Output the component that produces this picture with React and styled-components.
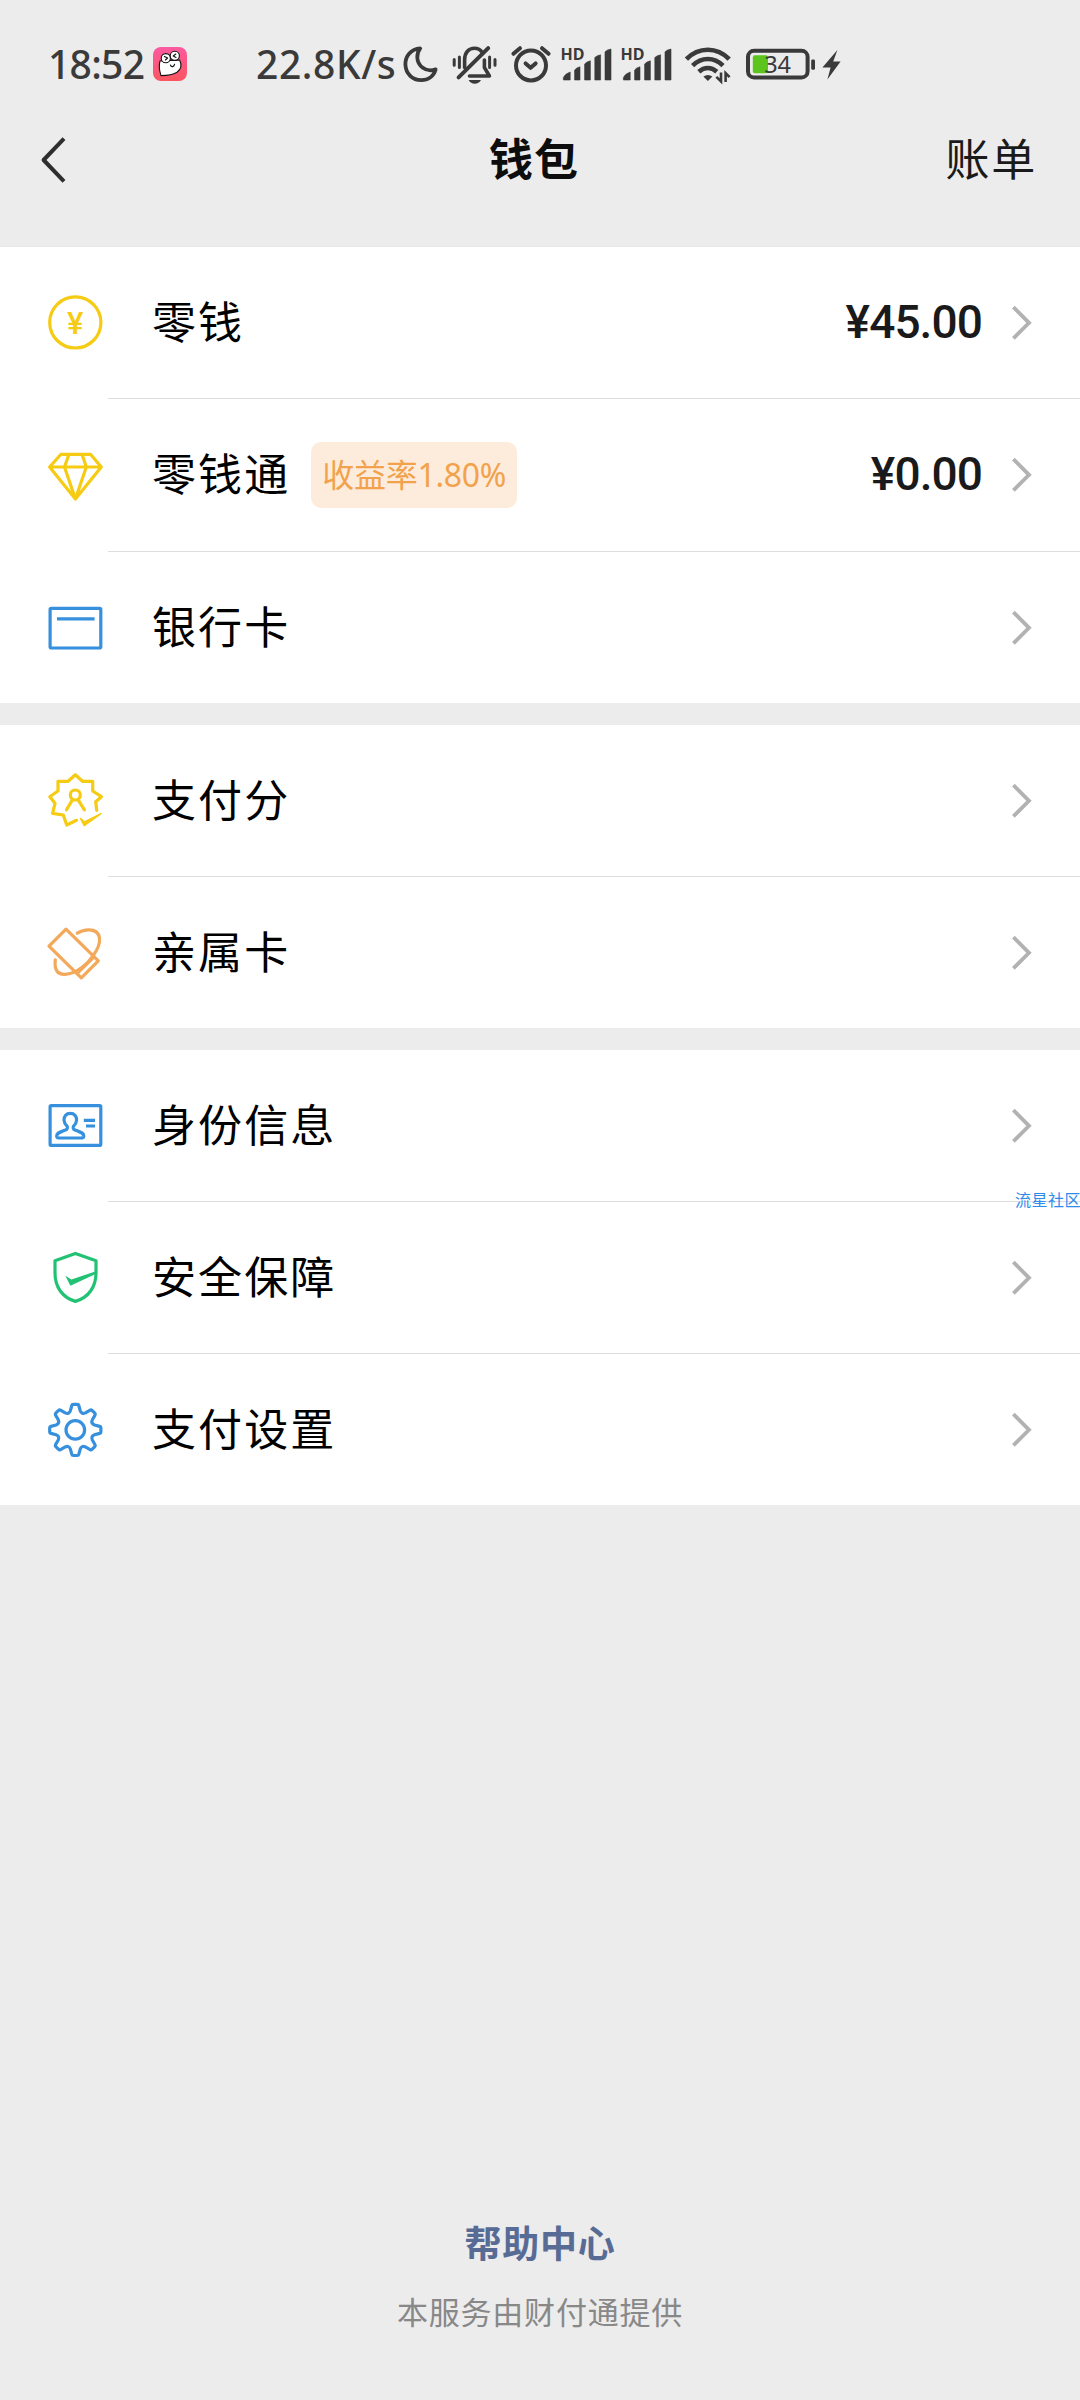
import React from "react";
import styled, { createGlobalStyle } from "styled-components";

const GlobalStyle = createGlobalStyle`
  html, body { margin: 0; padding: 0; background: #ececec; }
  * { box-sizing: border-box; }
  svg { display: block; flex: none; }
`;

const cjk = `"Noto Sans CJK SC", sans-serif`;

const Page = styled.div`
  position: relative;
  display: flex;
  flex-direction: column;
  width: 1080px;
  height: 2400px;
  overflow: hidden;
  background: #ececec;
  color: #000;
  font-family: "Noto Sans", ${cjk};
`;

const StatusBar = styled.header`
  display: flex;
  align-items: center;
  height: 128px;
  padding-left: 48px;
  flex: none;
`;

const StatusText = styled.span`
  width: ${(p) => p.$width}px;
  margin-left: ${(p) => p.$gap || 0}px;
  font: 500 39px/44px "Noto Sans", sans-serif;
  letter-spacing: ${(p) => p.$spacing || 0}px;
  color: #3a3a3a;
  white-space: nowrap;
`;

const StatusIcon = styled.svg`
  height: 44px;
  width: ${(p) => p.$width}px;
  margin-left: ${(p) => p.$gap}px;
  overflow: visible;
  color: #3a3a3a;
`;

const NavBar = styled.nav`
  display: grid;
  grid-template-columns: 1fr auto 1fr;
  align-items: center;
  height: 119px;
  padding: 0 43px 54px 40px;
  border-bottom: 1px solid #e8e8e8;
  flex: none;
`;

const Title = styled.h1`
  margin: 0 9px 6px 0;
  font: 700 44px/58px ${cjk};
  letter-spacing: 1px;
  color: #0d0d0d;
`;

const NavAction = styled.span`
  justify-self: end;
  margin-bottom: 6px;
  font: 400 44px/58px ${cjk};
  letter-spacing: 1.8px;
  color: #1a1a1a;
`;

const Group = styled.ul`
  list-style: none;
  margin: 0 0 22px;
  padding: 0;
  background: #fff;
  flex: none;
`;

const Row = styled.li`
  display: flex;
  align-items: center;
  height: ${(p) => p.$height || 152}px;
  padding: 0 48px ${(p) => (p.$height > 152 ? 1 : 0)}px 45px;
  background: ${(p) =>
    p.$last ? "none" : "linear-gradient(#dedede, #dedede) 108px 100% / 100% 1px no-repeat"};
`;

const Label = styled.span`
  margin-left: 47px;
  padding-bottom: 6px;
  font: 400 44px/64px ${cjk};
  letter-spacing: 2.1px;
`;

const Badge = styled.span`
  height: 66px;
  width: 206px;
  margin-left: 21px;
  padding-left: 11px;
  border-radius: 10px;
  background: #fdecdb;
  color: #f2a24c;
  font: 400 32px/65px "Noto Sans", ${cjk};
  letter-spacing: -0.3px;
  white-space: nowrap;
`;

const Amount = styled.span`
  margin-left: auto;
  margin-right: 28px;
  padding-bottom: 2px;
  font: 500 46px/64px Roboto, sans-serif;
  letter-spacing: -0.9px;
  color: #1a1a1a;
`;

const Chevron = styled.svg`
  width: 22px;
  height: 40px;
  margin-left: ${(p) => (p.$push ? "auto" : 0)};
`;

const Footer = styled.footer`
  display: flex;
  flex-direction: column;
  align-items: center;
  margin-top: auto;
  padding-bottom: 65px;
`;

const HelpLink = styled.a`
  font: 700 37px/54px ${cjk};
  letter-spacing: 0.8px;
  color: #576b95;
`;

const Provider = styled.span`
  margin-top: 18px;
  font: 400 31px/48px ${cjk};
  letter-spacing: 0.8px;
  color: #888;
`;

const Watermark = styled.span`
  position: absolute;
  left: 1015px;
  top: 1187px;
  font: 400 16px/24px ${cjk};
  letter-spacing: 0.5px;
  color: #2f8bea;
  white-space: nowrap;
`;

const IconBox = styled.svg.attrs({ viewBox: "0 0 60 60", fill: "none" })`
  width: 60px;
  height: 60px;
  stroke: ${(p) => p.$color};
  stroke-width: 3.2;
  stroke-linejoin: round;
  stroke-linecap: round;
`;

const YELLOW = "#f5cb14";
const BLUE = "#3690de";
const ORANGE = "#f3a85a";
const GREEN = "#22c274";

const CoinSign = styled.text`
  font: 500 31px Roboto, sans-serif;
  fill: ${YELLOW};
  stroke: none;
  text-anchor: middle;
`;

const CoinIcon = () => (
  <IconBox $color={YELLOW}>
    <circle cx="30.3" cy="29.4" r="25.6" />
    <CoinSign x="30.3" y="41">¥</CoinSign>
  </IconBox>
);

const DiamondIcon = () => (
  <IconBox $color={YELLOW}>
    <path d="M16 9.3H45.5L56.3 22L30.4 54L4.6 22Z M4.6 22H56.3 M24 9.3L19.5 22L30.4 54L41.3 22L37 9.3" />
  </IconBox>
);

const CardIcon = () => (
  <IconBox $color={BLUE}>
    <rect x="5.1" y="10.3" width="50.7" height="39.7" rx="1.2" />
    <path d="M12 20.8H49.6" strokeLinecap="butt" />
  </IconBox>
);

const ScoreIcon = () => (
  <IconBox $color={YELLOW}>
    <path d="M51.7 39.4L50.7 30.7L56.4 25.7L47.7 20V10.3H37.5L30.3 3.8L23.2 10.3H13V20L4.8 25.7L10 32.3L7.6 42.3L18.3 44L21.7 54L31.5 49.3" />
    <circle cx="30.3" cy="24" r="5" />
    <path d="M27.6 28.6L21.5 38.8M33 28.6L39.4 38.8" />
    <path d="M35.5 47.5L39.5 50.8L56 42.6L39.2 54.6Z" fill={YELLOW} strokeWidth="1.5" />
  </IconBox>
);

const FamilyIcon = () => (
  <IconBox $color={ORANGE}>
    <path d="M21 6.2L4 23.2L36.3 54.8L53.3 37.8Z" />
    <path d="M49 33.8L32 50.6" />
    <path d="M10.3 36.8C9 47.5 13 51.7 20 51.3C32 51 43.5 40 48.5 32C57.5 20 57 6.6 43.5 6.8C39.5 6.8 35.5 8.2 32.3 10.2" />
  </IconBox>
);

const IdentityIcon = () => (
  <IconBox $color={BLUE}>
    <rect x="5.1" y="9.7" width="50.7" height="39.7" rx="1.2" />
    <path d="M25.3 17.4C29.4 17.4 31.7 20.3 31.6 24C31.5 27 30.2 28.6 28.4 30.4C27.4 33 29 33.6 31.5 34.6C36 36.3 39 37 38.8 40.2C38.6 41.9 37.5 42 35.5 42H15C13 42 11.9 41.9 11.7 40.2C11.5 37 14.5 36.3 19 34.6C21.6 33.6 23.2 33 22.2 30.4C20.4 28.6 19.1 27 19 24C18.9 20.3 21.2 17.4 25.3 17.4Z" />
    <path d="M38.8 24.4H50M41 30H50" strokeLinecap="butt" />
  </IconBox>
);

const ShieldIcon = () => (
  <IconBox $color={GREEN}>
    <path d="M30.4 5.4L51 12.8V25C51 39 43.5 49.5 30.4 53.4C17.3 49.5 10 39 10 25V12.8Z" />
    <path d="M20.3 27.7L26.4 31.6L51.7 22.9V25.6L25.4 37.7Z" fill={GREEN} stroke="none" />
  </IconBox>
);

const gearPath = (() => {
  const at = (deg, x, y) => {
    const a = (deg * Math.PI) / 180;
    const px = 30.3 + x * Math.cos(a) - y * Math.sin(a);
    const py = 29.9 + x * Math.sin(a) + y * Math.cos(a);
    return `${px.toFixed(2)} ${py.toFixed(2)}`;
  };
  let d = "";
  for (let i = 0; i < 8; i += 1) {
    const r = i * 45;
    d += `${i ? "L" : "M"}${at(r, -4.9, -19.2)}L${at(r, -3.5, -24.4)}Q${at(r, -3.2, -25.6)} ${at(r, -2, -25.6)}`;
    d += `L${at(r, 2, -25.6)}Q${at(r, 3.2, -25.6)} ${at(r, 3.5, -24.4)}L${at(r, 4.9, -19.2)}`;
    d += `Q${at(r + 22.5, 0, -16.6)} ${at(r + 45, -4.9, -19.2)}`;
  }
  return `${d}Z`;
})();

const GearIcon = () => (
  <IconBox $color={BLUE}>
    <path d={gearPath} />
    <circle cx="30.3" cy="29.9" r="9.3" />
  </IconBox>
);

const Arrow = ({ push }) => (
  <Chevron viewBox="0 0 22 40" $push={push} fill="none" stroke="#b2b2b2" strokeWidth="3.8">
    <path d="M3.4 4.2L19 19.8L3.4 35.4" />
  </Chevron>
);

const HdLabel = styled.text`
  font: 700 16.5px "Noto Sans", sans-serif;
  fill: #3a3a3a;
`;

const Signal = ({ gap }) => (
  <StatusIcon viewBox="0 0 52 44" $width={52} $gap={gap} fill="currentColor">
    <HdLabel x="-0.5" y="18.2" textLength="24" lengthAdjust="spacingAndGlyphs">HD</HdLabel>
    <path d="M2.4 38V35.4Q4.5 31.5 9.2 30V38ZM13.6 38V28Q15.5 25.5 19 24.8V38ZM23.6 38V22Q25.5 19.7 29.4 18.8V38ZM33.8 38V15.5Q36 13.5 39.6 12.8V38ZM44 38V9.8Q46 7.6 50 7V38Z" strokeLinejoin="round" stroke="currentColor" strokeWidth="0.6" />
  </StatusIcon>
);

const BatteryLevel = styled.text`
  font: 400 23.5px "Noto Sans", sans-serif;
  fill: #3a3a3a;
  text-anchor: middle;
`;

const StatusIcons = () => (
  <>
    <StatusIcon viewBox="0 0 35 44" $width={35} $gap={5} fill="none" stroke="currentColor" strokeWidth="3.8" strokeLinejoin="round">
      <path d="M17.2 6.4C8 7 2.2 14 2.4 22.5C2.7 31.8 9.6 38.2 18.2 38.2C25.2 38.2 30.8 34 32.6 27.4C22.6 31 14.6 23.5 14.3 15.5C14.2 11.8 15.2 9 17.2 6.4Z" />
    </StatusIcon>
    <StatusIcon viewBox="0 0 46 44" $width={46} $gap={14} fill="none" stroke="currentColor" strokeWidth="3.6" strokeLinecap="round">
      <path d="M12.6 25.5V18C12.6 10.5 16.8 6.2 22.4 6.2C25.8 6.2 28.6 7.8 30.2 10.4" />
      <path d="M32.4 18V25.5L37.4 34H17.5" strokeLinejoin="round" />
      <path d="M36.2 6.2L6.6 35.4" strokeWidth="4" />
      <path d="M2.2 17.6V23.2M7.4 15V25.4M37.6 15V25.4M43 17.6V23.2" strokeWidth="3" />
      <path d="M16.6 38H29C27.6 40.6 25.5 41.8 22.8 41.8C20 41.8 18 40.6 16.6 38Z" fill="currentColor" stroke="none" />
    </StatusIcon>
    <StatusIcon viewBox="0 0 42 44" $width={42} $gap={12} fill="none" stroke="currentColor" strokeWidth="4" strokeLinecap="round">
      <circle cx="21" cy="23.4" r="15" />
      <path d="M3.4 11.8L10 6.2M32 6.2L38.6 11.8" strokeWidth="4" />
      <path d="M15.6 21.4L20.6 25.8L25.6 21.4" strokeLinejoin="round" />
    </StatusIcon>
    <Signal gap={9} />
    <Signal gap={8} />
    <StatusIcon viewBox="0 0 46 44" $width={46} $gap={12} fill="none" stroke="currentColor" strokeWidth="4.6">
      <path d="M1.4 17.2Q10.5 7.8 22.8 7.8Q35 7.8 44.2 17.2" />
      <path d="M7.6 23.6Q14.4 17 22.8 17Q31.2 17 38 23.6" />
      <path d="M13.8 29.8Q18 26 22.8 26Q27.6 26 31.8 29.8" />
      <path d="M18.4 34.6Q22.8 31.4 27.4 34.6L22.9 39Z" fill="currentColor" stroke="none" />
      <path d="M36 30.4V39.4L31.4 34.8M40.6 40V31.2L44.6 35.2" strokeWidth="2.6" />
    </StatusIcon>
    <StatusIcon viewBox="0 0 70 44" $width={70} $gap={15} fill="none">
      <rect x="2" y="8.8" width="59.6" height="26.6" rx="6" stroke="currentColor" strokeWidth="4" />
      <rect x="6.8" y="13.2" width="15.2" height="18" rx="2" fill="#5cc41c" />
      <rect x="65.2" y="17.4" width="3.8" height="10.4" rx="1.4" fill="currentColor" />
      <BatteryLevel x="31.6" y="30.8">34</BatteryLevel>
    </StatusIcon>
    <StatusIcon viewBox="0 0 20 44" $width={20} $gap={6} fill="currentColor">
      <path d="M15.4 8L0.4 25.6H8.6L5.4 37.4L18.6 19.4H11.2Z" />
    </StatusIcon>
  </>
);

const AppBadge = styled(StatusIcon)`
  height: 34px;
`;

const NotificationIcon = () => (
  <AppBadge viewBox="0 0 34 34" $width={34} $gap={8}>
    <defs>
      <linearGradient id="pink" x1="0" y1="0" x2="0" y2="1">
        <stop offset="0" stopColor="#fb5aa0" />
        <stop offset="1" stopColor="#fb5560" />
      </linearGradient>
    </defs>
    <rect width="34" height="34" rx="8" fill="url(#pink)" />
    <g fill="#fff" stroke="#111" strokeWidth="1.1" strokeLinejoin="round" strokeLinecap="round">
      <path d="M7 14C5.6 18.5 6.5 24 8 28.6C12 28.6 19.5 28 24 25.2C28 22.4 29 18 26.6 13Z" />
      <circle cx="12.8" cy="11.2" r="4.6" />
      <circle cx="21.8" cy="8.8" r="4.6" />
      <path d="M11.4 9.4L14.6 11L12.4 13M22.8 7L20.2 9L23 10.4M17.4 18C18.2 20.6 21.2 20 21.6 17.2" fill="none" />
    </g>
  </AppBadge>
);

const groups = [
  [
    { label: "零钱", icon: CoinIcon, amount: "¥45.00" },
    { label: "零钱通", icon: DiamondIcon, badge: "收益率1.80%", amount: "¥0.00", height: 153 },
    { label: "银行卡", icon: CardIcon, height: 151 },
  ],
  [
    { label: "支付分", icon: ScoreIcon },
    { label: "亲属卡", icon: FamilyIcon, height: 151 },
  ],
  [
    { label: "身份信息", icon: IdentityIcon },
    { label: "安全保障", icon: ShieldIcon },
    { label: "支付设置", icon: GearIcon, height: 151 },
  ],
];

export default function App() {
  return (
    <Page>
      <GlobalStyle />
      <StatusBar>
        <StatusText $width={97} $spacing={-0.7}>18:52</StatusText>
        <NotificationIcon />
        <StatusText $width={142} $gap={69} $spacing={0.6}>22.8K/s</StatusText>
        <StatusIcons />
      </StatusBar>
      <NavBar>
        <svg width="28" height="50" viewBox="0 0 28 50" fill="none" stroke="#2e2e2e" strokeWidth="4">
          <path d="M24 3.6L3.6 25L24 46.4" strokeLinejoin="round" />
        </svg>
        <Title>钱包</Title>
        <NavAction>账单</NavAction>
      </NavBar>
      <main>
        {groups.map((rows) => (
          <Group key={rows[0].label}>
            {rows.map(({ label, icon: Icon, badge, amount, height }, i) => (
              <Row key={label} $height={height} $last={i === rows.length - 1}>
                <Icon />
                <Label>{label}</Label>
                {badge && <Badge>{badge}</Badge>}
                {amount && <Amount>{amount}</Amount>}
                <Arrow push={!amount} />
              </Row>
            ))}
          </Group>
        ))}
      </main>
      <Footer>
        <HelpLink>帮助中心</HelpLink>
        <Provider>本服务由财付通提供</Provider>
      </Footer>
      <Watermark>流星社区</Watermark>
    </Page>
  );
}
